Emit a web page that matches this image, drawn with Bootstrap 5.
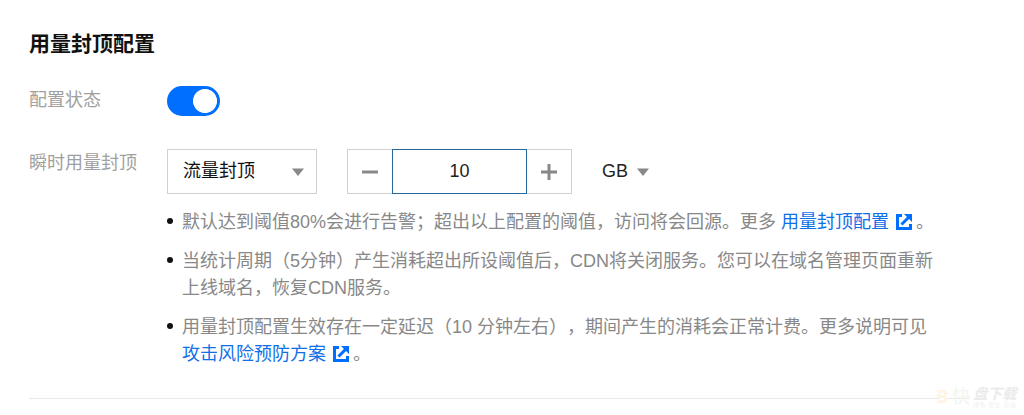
<!DOCTYPE html>
<html lang="zh-CN">
<head>
    <meta charset="UTF-8">
    <meta name="viewport" content="width=device-width, initial-scale=1.0">
    <title>用量封顶配置</title>
    <link href="https://cdn.jsdelivr.net/npm/bootstrap@5.3.0/dist/css/bootstrap.min.css" rel="stylesheet">
    <style>
        body {
            font-family: "Liberation Sans", "Noto Sans CJK SC", sans-serif;
            font-size: 18px;
            line-height: 27px;
            color: #111;
            overflow: hidden;
            text-spacing-trim: space-all;
        }
        .cap-panel { margin: 0 54px 0 29px; padding-top: 29px; height: 399px; border-bottom: 1px solid #e7e9ec; }
        .cap-title { font-size: 21px; line-height: 30px; font-weight: 700; }
        .cap-label { width: 138px; padding-top: 1px; color: #a0a0a0; }
        .state-row { height: 30px; margin-top: 27px; }
        .limit-row { margin-top: 33px; }
        .form-switch .cap-switch {
            width: 53px;
            height: 30px;
            margin: 0;
            border: 0;
            background-color: #006eff;
            background-image: radial-gradient(circle at 38px 15px, #fff 11.6px, transparent 12.4px);
            background-size: 100% 100%;
        }
        .cap-select { width: 150px; height: 45px; padding: 0 12px 0 15px; border: 1px solid #cfd1d4; }
        .caret { width: 12px; height: 8px; fill: #888; }
        .stepper { height: 45px; margin-left: 30px; }
        .step-btn { width: 45px; border: 1px solid #cfd1d4; background: #fff; color: #888; }
        .step-input { width: 135px; border: 1px solid #24699b; text-align: center; padding: 0; outline: 0; color: #222; }
        .unit { margin-left: 30px; gap: 9px; color: #222; }
        .cap-tips { margin: 15px 0 0; padding: 0; color: #888; }
        .cap-tips li { position: relative; padding-left: 15px; margin-bottom: 12px; white-space: nowrap; }
        .cap-tips li::before {
            content: "";
            position: absolute;
            left: 0;
            top: 9px;
            width: 6px;
            height: 6px;
            border-radius: 50%;
            background: #111;
        }
        .cap-tips a { color: #1070e8; text-decoration: none; }
        .ext { width: 16px; height: 16px; margin: 0 4px 0 2px; vertical-align: -2px; }
        .site-mark { position: absolute; left: 935px; top: 387px; height: 22px; color: #ebebeb; gap: 3px; }
        .mark-kuai { font-size: 18px; line-height: 20px; color: #f1f6ee; }
        .mark-name { font-size: 14.5px; line-height: 15px; font-weight: 700; font-style: italic; }
        .mark-sub { font-size: 6px; line-height: 6px; color: #f1f1f1; letter-spacing: .4px; }
    </style>
</head>
<body>
    <main class="cap-panel">
        <h1 class="cap-title m-0">用量封顶配置</h1>

        <div class="state-row d-flex">
            <label class="cap-label flex-shrink-0" for="capState">配置状态</label>
            <div class="form-check form-switch p-0 m-0 d-flex">
                <input class="form-check-input cap-switch" type="checkbox" role="switch" id="capState" checked>
            </div>
        </div>

        <div class="limit-row d-flex">
            <div class="cap-label flex-shrink-0">瞬时用量封顶</div>
            <div class="flex-grow-1">
                <div class="d-flex align-items-center">
                    <div class="cap-select d-flex align-items-center justify-content-between" role="button">
                        <span>流量封顶</span>
                        <svg class="caret" viewBox="0 0 12 8"><path d="M0 .5h12L6 8z"/></svg>
                    </div>
                    <div class="stepper d-flex">
                        <button class="step-btn border-end-0 p-0 d-flex align-items-center justify-content-center" type="button" aria-label="减少">
                            <svg width="16" height="16" viewBox="0 0 16 16"><path d="M0 8h16" stroke="currentColor" stroke-width="3"/></svg>
                        </button>
                        <input class="step-input" type="text" value="10" aria-label="用量">
                        <button class="step-btn border-start-0 p-0 d-flex align-items-center justify-content-center" type="button" aria-label="增加">
                            <svg width="16" height="16" viewBox="0 0 16 16"><path d="M0 8h16M8 0v16" stroke="currentColor" stroke-width="3"/></svg>
                        </button>
                    </div>
                    <div class="unit d-flex align-items-center" role="button">
                        <span>GB</span>
                        <svg class="caret" viewBox="0 0 12 8"><path d="M0 .5h12L6 8z"/></svg>
                    </div>
                </div>

                <ul class="cap-tips list-unstyled">
                    <li>默认达到阈值80%会进行告警；超出以上配置的阈值，访问将会回源。更多 <a href="#">用量封顶配置 <svg class="ext" viewBox="0 0 16 16" fill="none" stroke="#006eff" stroke-width="3"><path d="M6 1.5H1.5v13h13V10"/><path d="M5.5 10.5l7-7"/><path d="M8 0h8v8z" fill="#006eff" stroke="none"/></svg></a>。</li>
                    <li>当统计周期（5分钟）产生消耗超出所设阈值后，CDN将关闭服务。您可以在域名管理页面重新<br>上线域名，恢复CDN服务。</li>
                    <li>用量封顶配置生效存在一定延迟（10 分钟左右），期间产生的消耗会正常计费。更多说明可见<br><a href="#">攻击风险预防方案 <svg class="ext" viewBox="0 0 16 16" fill="none" stroke="#006eff" stroke-width="3"><path d="M6 1.5H1.5v13h13V10"/><path d="M5.5 10.5l7-7"/><path d="M8 0h8v8z" fill="#006eff" stroke="none"/></svg></a>。</li>
                </ul>
            </div>
        </div>
    </main>

    <div class="site-mark d-flex align-items-start">
        <svg width="14" height="18" viewBox="0 0 14 18"><path d="M1 3h9l3 3-3 3 3 3-3 4H1l3-4-3-3 3-3z" fill="#fef5e6"/><path d="M5 6h4v2H5zM5 11h4v2H5z" fill="#fff"/></svg>
        <span class="mark-kuai">快</span>
        <div>
            <div class="mark-name">盘下载</div>
            <div class="mark-sub">绿色·安全·高速</div>
        </div>
    </div>

    <script src="https://cdn.jsdelivr.net/npm/bootstrap@5.3.0/dist/js/bootstrap.bundle.min.js"></script>
</body>
</html>
